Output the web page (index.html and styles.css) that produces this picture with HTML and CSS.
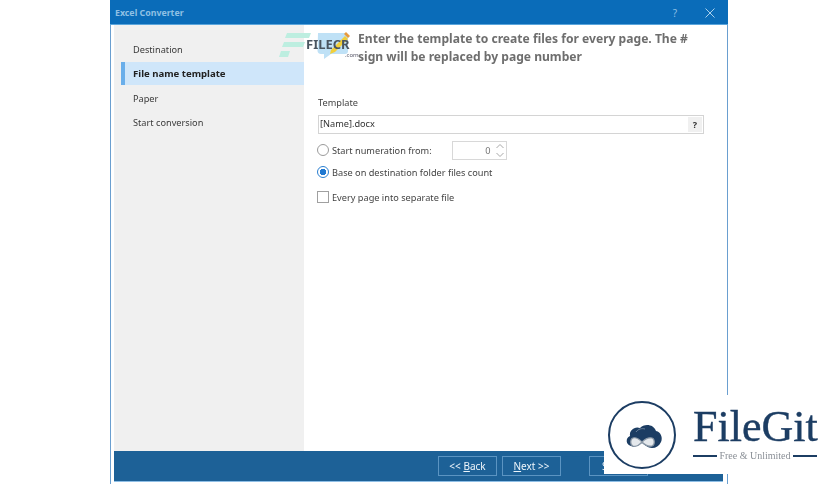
FILE: index.html
```html
<!DOCTYPE html>
<html lang="en">
<head>
<meta charset="utf-8">
<title>Excel Converter</title>
<link rel="stylesheet" href="styles.css">
</head>
<body>
<div class="window">
  <header class="titlebar">
    <span class="title">Excel Converter</span>
    <span class="title-help">?</span>
    <svg class="title-close" width="10" height="10" viewBox="0 0 10 10"><path d="M0.5 0.5L9.5 9.5M9.5 0.5L0.5 9.5"/></svg>
  </header>
  <div class="content">
    <nav class="sidebar">
      <div class="step">Destination</div>
      <div class="step active">File name template</div>
      <div class="step">Paper</div>
      <div class="step">Start conversion</div>
    </nav>
    <main class="panel">
      <p class="intro">Enter the template to create files for every page. The # sign will be replaced by page number</p>
      <label class="field-label">Template</label>
      <div class="template-input"><span class="input-val">[Name].docx</span><span class="help-btn">?</span></div>
      <div class="option first">
        <span class="radio"></span><span class="opt-text">Start numeration from:</span>
        <span class="spin"><span class="spin-val">0</span>
          <svg class="spin-arrows" width="10" height="17" viewBox="0 0 10 17"><path d="M1.5 6L5 2.5L8.5 6M1.5 11L5 14.500L8.500 11"/></svg>
        </span>
      </div>
      <div class="option second"><span class="radio on"></span><span class="opt-text">Base on destination folder files count</span></div>
      <div class="option third"><span class="check"></span><span class="opt-text">Every page into separate file</span></div>
    </main>
  </div>
  <footer class="footer">
    <span class="btn"><span>&lt;&lt; <u>B</u>ack</span></span>
    <span class="btn"><span><u>N</u>ext &gt;&gt;</span></span>
    <span class="btn start"><span>Start</span></span>
  </footer>
</div>

<div class="filecr">
  <svg width="80" height="30" viewBox="0 0 80 30">
    <path class="fc-green" d="M8 2H32L30 7H6ZM5 11H26L24 16H3ZM2 20H11L9 26H0Z"/>
    <path class="fc-blue" d="M39 2H66Q69 2 69 5V20Q69 23 66 23H52L45 28V23H42Q39 23 38.500 20Z"/>
    <path class="fc-yellow" d="M52 19L66 5L69 8L56 21L51 23Z"/>
    <path class="fc-orange" d="M65 3L67 1L71 5L69 7Z"/>
  </svg>
  <span class="fc-name">FILECR</span>
  <span class="fc-com">.com</span>
</div>

<div class="filegit">
  <svg class="fg-mark" width="70" height="70" viewBox="0 0 70 70">
    <circle class="fg-ring" cx="35" cy="35" r="33"/>
    <path class="fg-cloud" d="M24 46C19 45 18 38 23 36C22 30 28 26 33 28C37 23 47 24 49 31C54 32 56 38 54 42C52 46 49 48 45 48C41 48 38 45 35 43C32 45 28 48 24 46Z"/>
    <path class="fg-inf" d="M35 42C32 39 29 37 26 38C23 39 23 45 26 46C30 47 32 45 35 42C38 39 41 37 45 38C48 39 48 45 45 46C41 47 38 45 35 42Z"/>
    <path class="fg-shine" d="M29 32C31 29 35 28 38 29"/>
  </svg>
  <div class="fg-text">
    <div class="fg-name">FileGit</div>
    <div class="fg-sub"><i></i><span>Free &amp; Unlimited</span><i></i></div>
  </div>
</div>
</body>
</html>
```

FILE: styles.css
```css
* { box-sizing: border-box; }
html, body { margin: 0; height: 100%; background: #fff; overflow: hidden; }
body { position: relative; padding-left: 110px; font-family: "Noto Sans", sans-serif; font-size: 9.200px; color: #333; }

.window {
  width: 618px;
  height: 484px;
  border-left: 1px solid #6a9fd0;
  border-right: 1px solid #6a9fd0;
  display: flex;
  flex-direction: column;
  filter: blur(0.35px);
}
.titlebar {
  height: 25px;
  flex: none;
  background: #0a6cb9;
  border-bottom: 1px solid #5aa5dc;
  display: flex;
  align-items: center;
  padding: 1px 13px 0 5px;
  margin: 0 -1px;
}
.title { font-size: 8.800px; font-weight: 700; color: #8fc0e4; flex: 1; }
.title-help { font-size: 10px; color: #8dbfe4; margin-right: 28px; }
.title-close { fill: none; stroke: #a9d0ec; stroke-width: 1; }

.content { height: 426px; flex: none; display: flex; padding-left: 3px; }
.sidebar { width: 190px; flex: none; background: #f0f0f0; padding-top: 12px; }
.step { height: 24.500px; line-height: 25px; padding-left: 19px; color: #3a3a3a; }
.step.active {
  margin-left: 7px;
  padding-left: 8px;
  height: 23.500px;
  line-height: 23px;
  font-size: 9.600px;
  font-weight: 700;
  color: #222;
  background: #cfe6fa;
  border-left: 4px solid #69aeea;
}
.step.active + .step { margin-top: 0.5px; }
.panel { flex: 1; padding: 5px 23px 0 14px; }
.intro {
  margin: 0 0 0 40px;
  width: 345px;
  font-size: 12.100px;
  line-height: 18px;
  font-weight: 700;
  color: #6e6e6e;
}
.field-label { display: block; margin-top: 30px; line-height: 14px; color: #444; }
.template-input {
  margin-top: 5px;
  height: 19px;
  border: 1px solid #d4d4d4;
  display: flex;
  align-items: center;
  justify-content: space-between;
  padding: 0 1px 0 1px;
  color: #333;
}
.input-val { margin-top: -2px; }
.help-btn {
  width: 14px;
  height: 15px;
  background: #f0f0f0;
  text-align: center;
  line-height: 15px;
  font-size: 9px;
  font-weight: 700;
}
.option { display: flex; align-items: center; color: #444; }
.option.first { margin-top: 6px; height: 20px; }
.option.second { margin-top: 2px; height: 20px; }
.option.third { margin-top: 5px; height: 20px; }
.opt-text { margin-left: 3px; }
.radio {
  width: 12px;
  height: 12px;
  margin-left: -1px;
  border: 1px solid #9a9a9a;
  border-radius: 50%;
  background: #fff;
}
.radio.on { border-color: #2a7fd0; background: radial-gradient(circle, #1f78d1 0 3px, #fff 3.500px); }
.check { width: 12px; height: 12px; margin-left: -1px; border: 1px solid #a0a0a0; background: #fff; }
.spin {
  margin-left: 20px;
  width: 55px;
  height: 19px;
  border: 1px solid #d8d8d8;
  display: flex;
  align-items: center;
  justify-content: flex-end;
  padding-right: 1px;
  color: #777;
}
.spin-val { margin-right: 4px; }
.spin-arrows { fill: none; stroke: #a8a8a8; stroke-width: 1; }

.footer {
  height: 30px;
  flex: none;
  margin: 0 4px 0 3px;
  background: #1d6197;
  box-shadow: 0 1px #8fbfe6;
  display: flex;
  align-items: center;
  padding-left: 324px;
  gap: 5px;
}
.btn {
  width: 59px;
  height: 20px;
  border: 1px solid #5b94c2;
  display: flex;
  align-items: center;
  justify-content: center;
  color: #eef5fb;
  font-size: 10px;
}
.btn.start { margin-left: 23px; justify-content: flex-start; padding-left: 12px; }

.filecr { position: absolute; left: 279px; top: 31px; width: 82px; height: 30px; filter: blur(0.4px); }
.filecr svg { display: block; }
.fc-green { fill: #bdeee0; }
.fc-blue { fill: #bfe1f6; }
.fc-yellow { fill: #f2cf3a; }
.fc-orange { fill: #e89a3c; }
.fc-name { position: absolute; left: 27px; top: 5px; font-size: 13px; line-height: 16px; font-weight: 700; color: #4a5560; }
.fc-com { position: absolute; left: 66px; top: 20px; font-size: 6px; line-height: 8px; color: #556; }

.filegit {
  position: absolute;
  left: 604px;
  top: 395px;
  width: 232px;
  height: 79px;
  background: #fff;
  display: flex;
  filter: blur(0.3px);
}
.fg-mark { position: absolute; left: 3px; top: 5px; }
.fg-ring { fill: #fff; stroke: #1c3d63; stroke-width: 2; }
.fg-cloud { fill: #1c3d63; }
.fg-inf { fill: #e4e8ec; stroke: #8b98a6; stroke-width: 1.200; }
.fg-shine { fill: none; stroke: #7f93aa; stroke-width: 0.800; }
.fg-text { margin-left: 89px; width: 124px; }
.fg-name { font-family: "Liberation Serif", serif; font-size: 44px; line-height: 44px; margin-top: 10px; color: #1c3d63; white-space: nowrap; -webkit-text-stroke: 0.4px #1c3d63; }
.fg-sub { display: flex; align-items: center; gap: 2px; margin-top: 1px; }
.fg-sub i { flex: 1; height: 2px; background: #1c3d63; }
.fg-sub span { font-family: "Liberation Serif", serif; font-size: 10px; line-height: 12px; color: #8a8f96; white-space: nowrap; }
```
